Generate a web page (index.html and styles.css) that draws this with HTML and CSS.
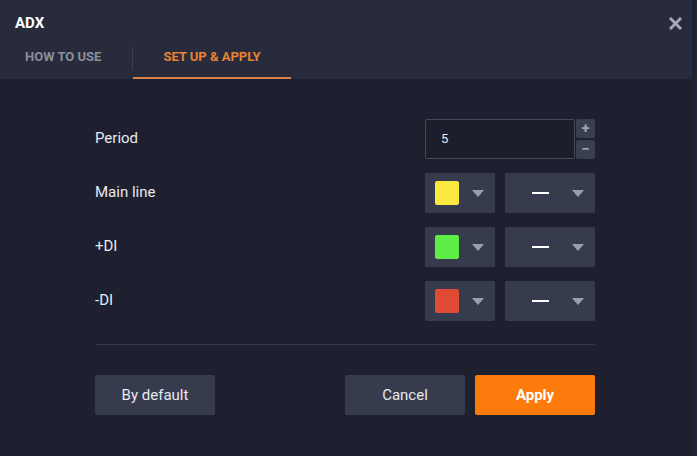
FILE: index.html
```html
<!DOCTYPE html>
<html lang="en">
<head>
  <meta charset="UTF-8">
  <title>ADX</title>
  <link rel="stylesheet" href="styles.css">
</head>
<body>
  <div class="dialog">
    <header class="dialog-head">
      <div class="title-row">
        <h1 class="title">ADX</h1>
        <button class="close" aria-label="Close">
          <svg width="13" height="13" viewBox="0 0 13 13"><path d="M2 2 L11 11 M11 2 L2 11" stroke="#a4a8b4" stroke-width="3" stroke-linecap="square"/></svg>
        </button>
      </div>
      <nav class="tabs">
        <a class="tab tab-first">HOW TO USE</a>
        <span class="tab-sep"></span>
        <a class="tab active">SET UP &amp; APPLY</a>
      </nav>
    </header>

    <main class="dialog-body">
      <div class="settings">
        <div class="row">
          <span class="label">Period</span>
          <div class="number">
            <div class="number-input">5</div>
            <div class="stepper">
              <button class="step">+</button>
              <button class="step">&minus;</button>
            </div>
          </div>
        </div>
        <div class="row">
          <span class="label">Main line</span>
          <div class="pickers">
            <div class="select color-select"><span class="swatch yellow"></span><span class="caret"></span></div>
            <div class="select line-select"><span class="dash"></span><span class="caret"></span></div>
          </div>
        </div>
        <div class="row">
          <span class="label">+DI</span>
          <div class="pickers">
            <div class="select color-select"><span class="swatch green"></span><span class="caret"></span></div>
            <div class="select line-select"><span class="dash"></span><span class="caret"></span></div>
          </div>
        </div>
        <div class="row">
          <span class="label">-DI</span>
          <div class="pickers">
            <div class="select color-select"><span class="swatch red"></span><span class="caret"></span></div>
            <div class="select line-select"><span class="dash"></span><span class="caret"></span></div>
          </div>
        </div>
      </div>

      <div class="actions">
        <button class="btn">By default</button>
        <div class="actions-right">
          <button class="btn">Cancel</button>
          <button class="btn btn-apply">Apply</button>
        </div>
      </div>
    </main>
  </div>
</body>
</html>
```

FILE: styles.css
```css
* {
  margin: 0;
  padding: 0;
  box-sizing: border-box;
}
body {
  font-family: Roboto, 'Liberation Sans', Arial, sans-serif;
  background-color: #1e2030;
  color: #e8e9ee;
  width: 697px;
  height: 456px;
  overflow: hidden;
}
button {
  font-family: inherit;
  border: none;
  cursor: pointer;
}
.dialog {
  height: 456px;
  display: flex;
  flex-direction: column;
  border-right: 5px solid #1f2232;
}
.dialog-head {
  background-color: #272b3c;
  height: 79px;
  display: flex;
  flex-direction: column;
}
.title-row {
  display: flex;
  justify-content: space-between;
  align-items: center;
  padding: 12px 10px 0 15px;
  height: 38px;
}
.title {
  font-size: 15px;
  font-weight: 700;
  color: #ffffff;
  line-height: 18px;
  margin-top: -4px;
}
.close {
  background: none;
  width: 13px;
  height: 13px;
  margin-top: -3px;
  display: flex;
}
.tabs {
  flex: 1;
  display: flex;
  align-items: stretch;
}
.tab {
  font-size: 13px;
  font-weight: 700;
  color: #8b8f9c;
  display: flex;
  align-items: center;
  padding: 0 30px 2px;
  border-bottom: 2px solid transparent;
}
.tab-first {
  padding-left: 25px;
  padding-right: 31px;
}
.tab-sep {
  width: 1px;
  height: 23px;
  margin-top: 9px;
  background-color: #3a3f50;
}
.tab.active {
  color: #ea8233;
  border-bottom-color: #d9804a;
}
.dialog-body {
  flex: 1;
  padding: 40px 0 0 95px;
}
.settings {
  width: 500px;
  display: flex;
  flex-direction: column;
  gap: 14px;
  padding-bottom: 23px;
  border-bottom: 1px solid #353a4a;
}
.row {
  display: flex;
  justify-content: space-between;
  align-items: center;
  height: 40px;
}
.label {
  font-size: 15px;
  margin-top: -2px;
}
.number {
  display: flex;
  gap: 1px;
}
.number-input {
  width: 150px;
  height: 40px;
  border: 1px solid #454a5b;
  border-radius: 2px;
  background-color: #1c1e2b;
  font-size: 13px;
  line-height: 38px;
  padding-left: 15px;
}
.stepper {
  display: flex;
  flex-direction: column;
  gap: 2px;
}
.step {
  width: 19px;
  height: 19px;
  background-color: #3a3e51;
  color: #a3a7b3;
  font-size: 15px;
  font-weight: 700;
  line-height: 19px;
  border-radius: 2px;
}
.pickers {
  display: flex;
  gap: 10px;
}
.select {
  height: 40px;
  background-color: #373b4e;
  border-radius: 2px;
  display: flex;
  align-items: center;
}
.color-select {
  width: 70px;
  padding-left: 10px;
  gap: 13px;
}
.line-select {
  width: 90px;
  padding-left: 27px;
  gap: 23px;
}
.swatch {
  width: 24px;
  height: 24px;
  border-radius: 2px;
}
.yellow { background-color: #fbe942; }
.green { background-color: #5ded45; }
.red { background-color: #e04b36; }
.dash {
  width: 17px;
  height: 2px;
  background-color: #ffffff;
}
.caret {
  width: 0;
  height: 0;
  border-left: 6px solid transparent;
  border-right: 6px solid transparent;
  border-top: 7px solid #9a9eab;
}
.actions {
  width: 500px;
  display: flex;
  justify-content: space-between;
  margin-top: 30px;
}
.actions-right {
  display: flex;
  gap: 10px;
}
.btn {
  width: 120px;
  height: 40px;
  background-color: #373b4e;
  color: #e8e9ee;
  font-size: 15px;
  border-radius: 2px;
}
.btn-apply {
  background-color: #fd7a0c;
  color: #ffffff;
  font-weight: 700;
}
```
